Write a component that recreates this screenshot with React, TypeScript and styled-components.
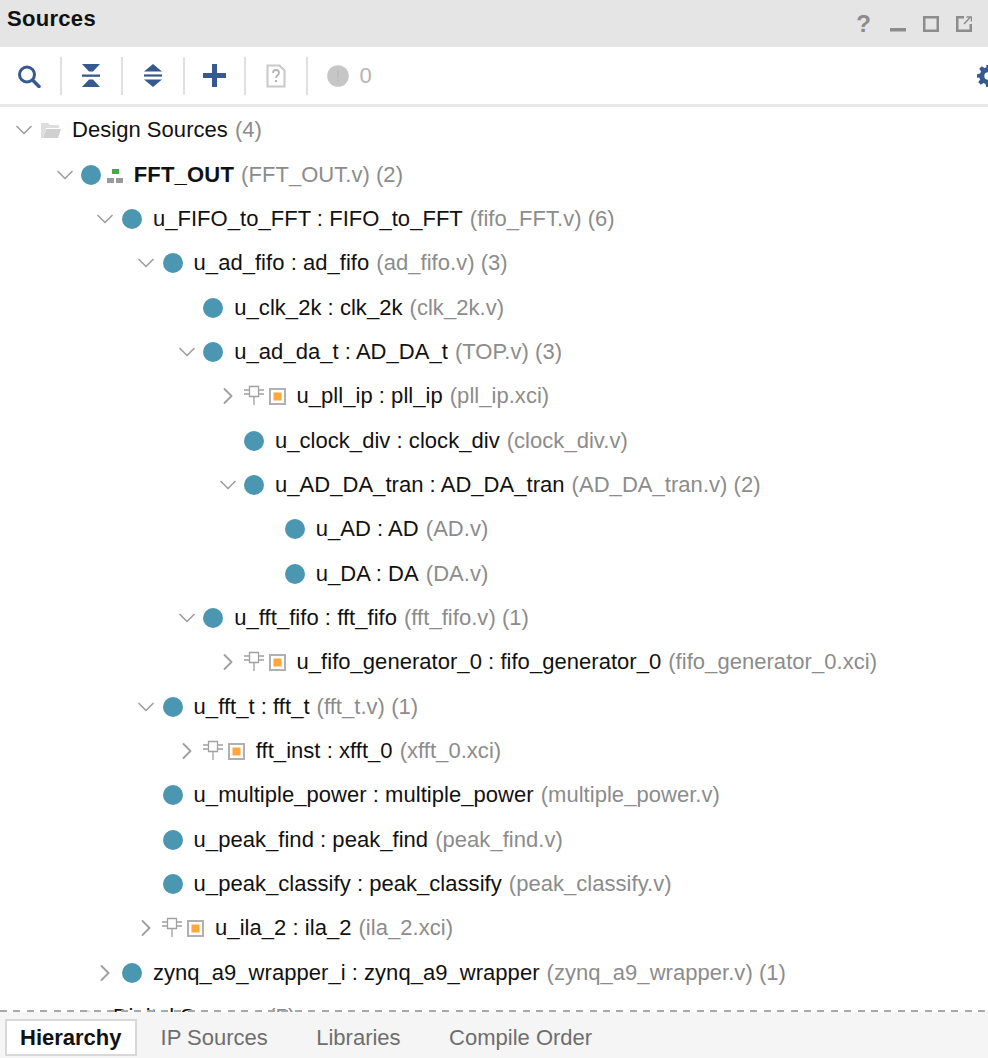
import React from "react";
import styled, { createGlobalStyle } from "styled-components";
import { ChevronDown, ChevronRight } from "lucide-react";

const GlobalStyle = createGlobalStyle`
  html, body {
    margin: 0;
    padding: 0;
    background: #fff;
  }
  body {
    font-family: "Liberation Sans", Arial, sans-serif;
  }
`;

const Panel = styled.div`
  width: 988px;
  height: 1058px;
  display: flex;
  flex-direction: column;
  overflow: hidden;
  background: #fff;
`;

const TitleBar = styled.div`
  height: 47px;
  flex: none;
  display: flex;
  align-items: center;
  justify-content: space-between;
  padding: 0 16px 9px 7px;
  box-sizing: border-box;
  background: #e5e5e5;
`;

const Title = styled.div`
  font-size: 22px;
  font-weight: 700;
  letter-spacing: 0.3px;
  color: #111;
`;

const WindowButtons = styled.div`
  display: flex;
  align-items: center;
  gap: 17px;
  margin-top: 9px;
`;

const Toolbar = styled.div`
  height: 60px;
  flex: none;
  display: flex;
  align-items: center;
  box-sizing: border-box;
  border-bottom: 3px solid #e8e8e8;
  position: relative;
`;

const ToolSlot = styled.div`
  width: 61.5px;
  height: 38px;
  flex: none;
  display: flex;
  align-items: center;
  justify-content: center;
  box-sizing: border-box;
  border-right: 2px solid #e0e0e0;
`;

const StatusSlot = styled.div`
  display: flex;
  align-items: center;
  gap: 11px;
  margin-left: 19px;
  font-size: 22px;
  color: #b4b4b4;
`;

const GearWrap = styled.div`
  position: absolute;
  left: 977px;
  top: 18px;
  line-height: 0;
`;

const Tree = styled.div`
  flex: 1;
  min-height: 0;
  overflow: hidden;
  padding-top: 1px;
`;

const Row = styled.div<{ $level: number }>`
  height: 44.35px;
  display: flex;
  align-items: center;
  padding-left: ${(p) => 14 + p.$level * 40.7}px;
  font-size: 22px;
  letter-spacing: 0.04px;
  color: #111;
  white-space: nowrap;
`;

const Toggle = styled.span`
  width: 20px;
  height: 20px;
  flex: none;
  display: flex;
  align-items: center;
  justify-content: center;
  color: #a0a0a0;
  margin-right: 6px;

  svg {
    flex: none;
  }
`;

const Dot = styled.span`
  width: 20px;
  height: 20px;
  flex: none;
  border-radius: 50%;
  background: #4b96b1;
  margin: 0 11px 0 0.5px;
`;

const Label = styled.span<{ $bold?: boolean }>`
  font-weight: ${(p) => (p.$bold ? 700 : 400)};
  letter-spacing: ${(p) => (p.$bold ? "0.2px" : "0.04px")};
`;

const Hint = styled.span`
  color: #8c8c8c;
  margin-left: 7px;
`;

const Tabs = styled.div`
  height: 46px;
  flex: none;
  display: flex;
  align-items: stretch;
  box-sizing: border-box;
  padding: 7px 0 2px 5px;
  background: #f5f5f5;
  position: relative;

  &::before {
    content: "";
    position: absolute;
    left: 0;
    right: 0;
    top: -2px;
    height: 2px;
    background: repeating-linear-gradient(90deg, #a8a8a8 0 7px, transparent 7px 13.4px);
  }
`;

const Tab = styled.div<{ $active?: boolean }>`
  display: flex;
  align-items: center;
  box-sizing: border-box;
  padding: 0 ${(p) => (p.$active ? 13 : 14)}px 0 ${(p) => (p.$active ? 13 : 22)}px;
  margin-right: ${(p) => (p.$active ? 2 : 12.5)}px;
  font-size: 22px;
  font-weight: ${(p) => (p.$active ? 700 : 400)};
  color: ${(p) => (p.$active ? "#111" : "#6e6e6e")};
  background: ${(p) => (p.$active ? "#fff" : "transparent")};
  border: ${(p) => (p.$active ? "2px solid #d8d8d8" : "none")};
`;

const ICON_BLUE = "#36598f";
const WINDOW_GREY = "#8c8c8c";

const SearchIcon = () => (
  <svg width="24" height="24" viewBox="0 0 24 24" fill="none">
    <circle cx="9" cy="10.5" r="7.5" stroke={ICON_BLUE} strokeWidth="3" />
    <path d="M15 16.500l6 6" stroke={ICON_BLUE} strokeWidth="3.500" strokeLinecap="round" />
  </svg>
);

const CollapseIcon = () => (
  <svg width="18" height="23" viewBox="0 0 18 23" fill={ICON_BLUE}>
    <path d="M0 0h18l-7 7.500H7zM0 23h18l-7-7.500H7z" />
    <rect x="0" y="10.500" width="18" height="2.300" />
  </svg>
);

const ExpandIcon = () => (
  <svg width="18" height="23" viewBox="0 0 18 23" fill={ICON_BLUE}>
    <path d="M9 0l9 7.500H0zM9 23l-9-7.500h18z" />
    <rect x="0" y="10.400" width="18" height="2.200" />
  </svg>
);

const PlusIcon = () => (
  <svg width="23" height="23" viewBox="0 0 23 23" fill={ICON_BLUE}>
    <rect x="0" y="9" width="23" height="5" />
    <rect x="9" y="0" width="5" height="23" />
  </svg>
);

const DocQuestionIcon = () => (
  <svg width="20" height="24" viewBox="0 0 20 24" fill="none">
    <path d="M1.500 1.500h12l5 5v16h-17z" stroke="#c8c8c8" strokeWidth="2" />
    <path d="M7 9c0-4 6-4 6 0 0 2-3 2-3 5" stroke="#b4b4b4" strokeWidth="1.800" />
    <rect x="9" y="16" width="2" height="2" fill="#b4b4b4" />
  </svg>
);

const GearIcon = () => (
  <svg width="22" height="22" viewBox="0 0 24 24" fill={ICON_BLUE}>
    <path d="M10 0h4l.6 3.400 2.300 1 2.900-2 2.800 2.800-2 2.900 1 2.300L24 10v4l-3.400.6-1 2.300 2 2.900-2.800 2.800-2.900-2-2.300 1L14 24h-4l-.6-3.400-2.300-1-2.900 2-2.800-2.800 2-2.900-1-2.300L0 14v-4l3.400-.6 1-2.300-2-2.900 2.800-2.800 2.900 2 2.300-1zM12 8a4 4 0 100 8 4 4 0 000-8z" />
  </svg>
);

const StatusDot = () => (
  <svg width="22" height="22" viewBox="0 0 22 22">
    <circle cx="11" cy="11" r="10.800" fill="#c6c6c6" />
    <rect x="10" y="5" width="2" height="7.500" fill="#bdbdbd" />
    <rect x="10" y="14.500" width="2" height="2" fill="#bdbdbd" />
  </svg>
);

const FolderIcon = () => (
  <svg width="20" height="17" viewBox="0 0 20 17" style={{ marginRight: 11, marginLeft: 1, flex: "none" }}>
    <path d="M0 1h7l2 2h9v3H5L2 16H0z" fill="#dedede" />
    <path d="M5 7h15l-3 9H2z" fill="#d0d0d0" />
  </svg>
);

const TopIcon = () => (
  <svg width="16" height="16" viewBox="0 0 16 16" style={{ marginRight: 11, marginLeft: -5.5, flex: "none" }}>
    <rect x="5" y="2" width="7" height="5" fill="#35b04c" />
    <rect x="0" y="11" width="7" height="5" fill="#9a9a9a" />
    <rect x="9" y="11" width="7" height="5" fill="#9a9a9a" />
  </svg>
);

const IpIcon = () => (
  <svg width="44" height="22" viewBox="0 0 44 22" style={{ marginRight: 9, flex: "none" }}>
    <path d="M5.500 1.500h9v10h-9zM0 5h5.500M0 9h5.500M14.500 5H20M14.500 9H20M10 11.500V20" stroke="#a0a0a0" strokeWidth="1.300" fill="none" />
    <rect x="26" y="4" width="15" height="15" fill="#fff" stroke="#b0b0b0" strokeWidth="2" />
    <rect x="29.500" y="7.500" width="8" height="8" fill="#ffa63d" />
  </svg>
);

const MinimizeIcon = () => (
  <svg width="16" height="16" viewBox="0 0 16 16" fill={WINDOW_GREY} style={{ marginTop: 1 }}>
    <rect x="0" y="12" width="16" height="3.500" />
  </svg>
);

const MaximizeIcon = () => (
  <svg width="16" height="16" viewBox="0 0 16 16" fill="none">
    <rect x="1.250" y="1.250" width="13.500" height="13.500" stroke={WINDOW_GREY} strokeWidth="2.500" />
  </svg>
);

const FloatIcon = () => (
  <svg width="16" height="16" viewBox="0 0 16 16" fill="none" stroke={WINDOW_GREY}>
    <path d="M8 1.250H1.250v13.500h13.500V8" strokeWidth="2.500" />
    <path d="M8 8l6-6.500M10.500 1h5v4.500" strokeWidth="1.500" />
  </svg>
);

const QuestionMark = styled.span`
  font-size: 24px;
  font-weight: 700;
  color: ${WINDOW_GREY};
  line-height: 18px;
  margin-right: 2px;
`;

type Node = {
  level: number;
  toggle?: "open" | "closed";
  kind: "source" | "top" | "ip" | "folder";
  name: string;
  hint: string;
};

const nodes: Node[] = [
  { level: 0, toggle: "open", kind: "folder", name: "Design Sources", hint: "(4)" },
  { level: 1, toggle: "open", kind: "top", name: "FFT_OUT", hint: "(FFT_OUT.v) (2)" },
  { level: 2, toggle: "open", kind: "source", name: "u_FIFO_to_FFT : FIFO_to_FFT", hint: "(fifo_FFT.v) (6)" },
  { level: 3, toggle: "open", kind: "source", name: "u_ad_fifo : ad_fifo", hint: "(ad_fifo.v) (3)" },
  { level: 4, kind: "source", name: "u_clk_2k : clk_2k", hint: "(clk_2k.v)" },
  { level: 4, toggle: "open", kind: "source", name: "u_ad_da_t : AD_DA_t", hint: "(TOP.v) (3)" },
  { level: 5, toggle: "closed", kind: "ip", name: "u_pll_ip : pll_ip", hint: "(pll_ip.xci)" },
  { level: 5, kind: "source", name: "u_clock_div : clock_div", hint: "(clock_div.v)" },
  { level: 5, toggle: "open", kind: "source", name: "u_AD_DA_tran : AD_DA_tran", hint: "(AD_DA_tran.v) (2)" },
  { level: 6, kind: "source", name: "u_AD : AD", hint: "(AD.v)" },
  { level: 6, kind: "source", name: "u_DA : DA", hint: "(DA.v)" },
  { level: 4, toggle: "open", kind: "source", name: "u_fft_fifo : fft_fifo", hint: "(fft_fifo.v) (1)" },
  { level: 5, toggle: "closed", kind: "ip", name: "u_fifo_generator_0 : fifo_generator_0", hint: "(fifo_generator_0.xci)" },
  { level: 3, toggle: "open", kind: "source", name: "u_fft_t : fft_t", hint: "(fft_t.v) (1)" },
  { level: 4, toggle: "closed", kind: "ip", name: "fft_inst : xfft_0", hint: "(xfft_0.xci)" },
  { level: 3, kind: "source", name: "u_multiple_power : multiple_power", hint: "(multiple_power.v)" },
  { level: 3, kind: "source", name: "u_peak_find : peak_find", hint: "(peak_find.v)" },
  { level: 3, kind: "source", name: "u_peak_classify : peak_classify", hint: "(peak_classify.v)" },
  { level: 3, toggle: "closed", kind: "ip", name: "u_ila_2 : ila_2", hint: "(ila_2.xci)" },
  { level: 2, toggle: "closed", kind: "source", name: "zynq_a9_wrapper_i : zynq_a9_wrapper", hint: "(zynq_a9_wrapper.v) (1)" },
  { level: 1, kind: "folder", name: "Digital Sources", hint: "(5)" },
];

const TreeRow = ({ node }: { node: Node }) => (
  <Row $level={node.level}>
    <Toggle>
      {node.toggle === "open" && <ChevronDown size={28} strokeWidth={1.5} />}
      {node.toggle === "closed" && <ChevronRight size={28} strokeWidth={1.6} />}
    </Toggle>
    {node.kind === "folder" && <FolderIcon />}
    {node.kind === "ip" && <IpIcon />}
    {(node.kind === "source" || node.kind === "top") && <Dot />}
    {node.kind === "top" && <TopIcon />}
    <Label $bold={node.kind === "top"}>{node.name}</Label>
    <Hint>{node.hint}</Hint>
  </Row>
);

export default function App() {
  return (
    <Panel>
      <GlobalStyle />
      <TitleBar>
        <Title>Sources</Title>
        <WindowButtons>
          <QuestionMark>?</QuestionMark>
          <MinimizeIcon />
          <MaximizeIcon />
          <FloatIcon />
        </WindowButtons>
      </TitleBar>
      <Toolbar>
        <ToolSlot><SearchIcon /></ToolSlot>
        <ToolSlot><CollapseIcon /></ToolSlot>
        <ToolSlot><ExpandIcon /></ToolSlot>
        <ToolSlot><PlusIcon /></ToolSlot>
        <ToolSlot><DocQuestionIcon /></ToolSlot>
        <StatusSlot>
          <StatusDot />
          0
        </StatusSlot>
        <GearWrap><GearIcon /></GearWrap>
      </Toolbar>
      <Tree>
        {nodes.map((node) => (
          <TreeRow key={node.name} node={node} />
        ))}
      </Tree>
      <Tabs>
        <Tab $active>Hierarchy</Tab>
        <Tab>IP Sources</Tab>
        <Tab>Libraries</Tab>
        <Tab>Compile Order</Tab>
      </Tabs>
    </Panel>
  );
}
